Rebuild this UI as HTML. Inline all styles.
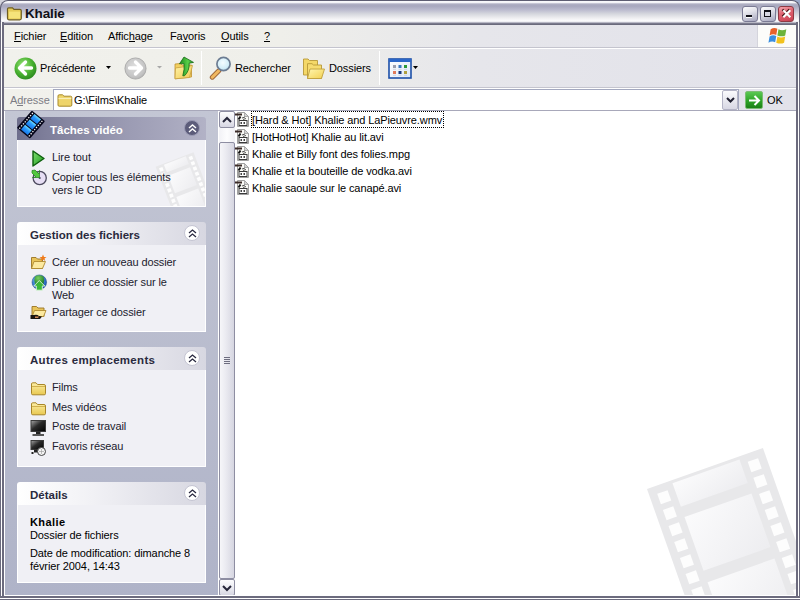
<!DOCTYPE html>
<html><head><meta charset="utf-8">
<style>
*{margin:0;padding:0;box-sizing:border-box}
html,body{width:800px;height:600px;overflow:hidden;background:#fff;font-family:"Liberation Sans",sans-serif;font-size:11px;color:#000;letter-spacing:-0.1px}
.a{position:absolute}
#win{position:absolute;left:0;top:0;width:800px;height:600px;background:#fff;overflow:hidden}
/* frame */
#fl{position:absolute;left:0;top:22px;width:4px;height:578px;background:linear-gradient(90deg,#6c6b7e 0,#6c6b7e 1px,#fff 1px,#fff 2px,#6c6b7e 2px,#6c6b7e 4px)}
#fr{position:absolute;left:796px;top:22px;width:4px;height:578px;background:linear-gradient(90deg,#6c6b7e 0,#6c6b7e 2px,#fff 2px,#fff 3px,#6c6b7e 3px)}
#fb{position:absolute;left:0;top:596px;width:800px;height:4px;background:linear-gradient(#6c6b7e 0,#6c6b7e 2px,#fff 2px,#fff 3px,#6c6b7e 3px)}
#title{position:absolute;left:0;top:0;width:800px;height:25px;border-radius:8px 8px 0 0;border:1px solid #5e5e72;border-bottom:none;
 background:linear-gradient(#fafafc 0px,#f4f4f8 1.5px,#b0b0c4 3px,#a8a8be 5px,#bcbccf 9px,#d6d8de 13px,#eeeef0 17px,#fcfcfe 20px,#e4e4ea 21px,#8c8ca0 22px,#6a6a7c 23px);}
#title .t{position:absolute;left:24px;top:5px;font-weight:bold;font-size:13.5px;color:#101018;letter-spacing:-0.15px}
.tbtn{position:absolute;top:5px;width:16px;height:16px;border-radius:3px;border:1px solid #7a7a94;
 background:linear-gradient(160deg,#fcfcfe 0%,#e2e2ea 40%,#b4b4c8 85%,#a4a4bc 100%)}
.menubar{position:absolute;left:4px;top:25px;width:792px;height:23px;background:linear-gradient(90deg,#f1f1ec 0%,#efefea 35%,#e6e6eb 60%,#e2e2ea 100%);border-bottom:1px solid #c4c4ce}
.menubar>span{position:absolute;top:5px}
.u{display:inline-block;border-bottom:1px solid #000;line-height:10px}
.logo{position:absolute;left:753px;top:0;width:39px;height:22px;background:#fcfcfa;border-left:1px solid #d4d4dc}
.toolbar{position:absolute;left:4px;top:48px;width:792px;height:41px;background:linear-gradient(#fff 0,#fff 1px,transparent 1px,transparent 39px,#c4c4ce 39px,#c4c4ce 40px,#fff 40px),linear-gradient(90deg,#f1f1ec 0%,#efefea 35%,#e6e6eb 60%,#e2e2ea 100%)}
.addr{position:absolute;left:4px;top:89px;width:792px;height:22px;background:linear-gradient(90deg,#f1f1ec 0%,#efefea 35%,#e6e6eb 60%,#e2e2ea 100%)}
.content{position:absolute;left:4px;top:111px;width:792px;height:485px;background:#fff}
.pane{position:absolute;left:0;top:0;width:214px;height:485px;background:linear-gradient(#c3c6d4,#afb3c8);border-left:1px solid #fff}
.grp{position:absolute;left:12px;width:189px}
.gh{position:absolute;left:0;top:0;width:189px;height:23px;border-radius:3px 3px 0 0;background:linear-gradient(90deg,#ffffff 0%,#f1f1f5 40%,#d7d7e1 100%)}
.gh .t{position:absolute;left:13px;top:7px;font-weight:bold;font-size:11.5px;color:#2a2a3e;letter-spacing:0}
.gb{position:absolute;left:0;top:23px;width:189px;background:#f0f0f5;border:1px solid #fff;border-top:none;overflow:hidden}
.chev{position:absolute;left:167px;top:3px;width:16px;height:16px;border-radius:50%;background:#fff;border:1px solid #c4c4d2}
.it{position:absolute;left:34px;color:#21212e;line-height:13px}
.ic{position:absolute;left:14px}
.sb{position:absolute;left:215px;top:0;width:16px;height:485px;background:linear-gradient(90deg,#f2f2f6,#fdfdfe 50%,#f0f0f4)}
.files .f{position:absolute;left:248px;line-height:13px;white-space:nowrap}
.files .fi{position:absolute;left:231px}
</style></head><body>
<div id="win">
<svg width="0" height="0" style="position:absolute"><defs>
<linearGradient id="frg" x1="0" y1="0" x2="1" y2="1"><stop offset="0" stop-color="#fbfbfc"/><stop offset="1" stop-color="#ededf0"/></linearGradient>
<g id="film">
<rect x="0" y="0" width="123" height="220" fill="#e8e8ea"/>
<rect x="8" y="8" width="11" height="11" fill="#fdfdfd"/><rect x="8" y="25" width="11" height="11" fill="#fdfdfd"/><rect x="8" y="42" width="11" height="11" fill="#fdfdfd"/><rect x="8" y="59" width="11" height="11" fill="#fdfdfd"/><rect x="8" y="76" width="11" height="11" fill="#fdfdfd"/><rect x="8" y="93" width="11" height="11" fill="#fdfdfd"/><rect x="8" y="110" width="11" height="11" fill="#fdfdfd"/><rect x="8" y="127" width="11" height="11" fill="#fdfdfd"/><rect x="8" y="144" width="11" height="11" fill="#fdfdfd"/>
<rect x="104" y="8" width="11" height="11" fill="#fdfdfd"/><rect x="104" y="25" width="11" height="11" fill="#fdfdfd"/><rect x="104" y="42" width="11" height="11" fill="#fdfdfd"/><rect x="104" y="59" width="11" height="11" fill="#fdfdfd"/><rect x="104" y="76" width="11" height="11" fill="#fdfdfd"/><rect x="104" y="93" width="11" height="11" fill="#fdfdfd"/><rect x="104" y="110" width="11" height="11" fill="#fdfdfd"/><rect x="104" y="127" width="11" height="11" fill="#fdfdfd"/><rect x="104" y="144" width="11" height="11" fill="#fdfdfd"/>
<rect x="26" y="3" width="71" height="25" fill="url(#frg)"/>
<rect x="26" y="39" width="71" height="57" fill="url(#frg)"/>
<rect x="26" y="108" width="71" height="57" fill="url(#frg)"/>
</g></defs></svg>
 <div class="a" style="left:0;top:0;width:8px;height:8px;background:#d4d4dc"></div>
 <div class="a" style="left:792px;top:0;width:8px;height:8px;background:#9aa8c8"></div>
 <div id="title">
  <svg class="a" style="left:5px;top:6px" width="17" height="14" viewBox="0 0 17 14">
   <path d="M1.5 2 Q1.5 0.8 2.7 0.8 H6.5 L8 2.3 H13.8 Q15.3 2.3 15.3 3.8 V11.3 Q15.3 12.8 13.8 12.8 H3 Q1.5 12.8 1.5 11.3 Z" fill="#e6cc58" stroke="#6e5e24" stroke-width="1.2"/>
   <path d="M3 4.6 H14 V11.4 H3 Z" fill="#f6e47a"/>
  </svg>
  <div class="t">Khalie</div>
  <div class="tbtn" style="left:741px"><div class="a" style="left:3px;top:8px;width:6px;height:3px;background:#101018;border-bottom:1px solid #fff"></div></div>
  <div class="tbtn" style="left:759px"><div class="a" style="left:3px;top:3px;width:7px;height:7px;border:1px solid #101018;border-top-width:2px;background:#d8d8e4"></div></div>
  <div class="tbtn" style="left:777px;border-color:#8e3a44;background:linear-gradient(160deg,#f4a8b0 0%,#e06472 40%,#d04a5a 85%,#b83848 100%)">
   <svg class="a" style="left:2px;top:1px" width="12" height="12" viewBox="0 0 12 12"><path d="M1.5 1.5 L8.5 8.5 M8.5 1.5 L1.5 8.5" stroke="#3a1010" stroke-width="2.2"/><path d="M2.3 2.3 L9.3 9.3 M9.3 2.3 L2.3 9.3" stroke="#fff" stroke-width="2.2"/></svg>
  </div>
 </div>
 <div class="a" style="left:4px;top:595px;width:792px;height:1px;background:#fff;z-index:3"></div>
 <div id="fl"></div><div id="fr"></div><div id="fb"></div>
 <div class="menubar">
  <span style="left:10px"><span class="u">F</span>ichier</span>
  <span style="left:56px"><span class="u">E</span>dition</span>
  <span style="left:104px">Affic<span class="u">h</span>age</span>
  <span style="left:166px">Fa<span class="u">v</span>oris</span>
  <span style="left:217px"><span class="u">O</span>utils</span>
  <span style="left:260px"><span class="u">?</span></span>
  <div class="logo">
   <svg class="a" style="left:10px;top:1px" width="21" height="19" viewBox="0 0 18 17">
    <path d="M2 3 Q5 1 8 2.5 L7 8 Q4 6.5 1 8.5 Z" fill="#e8622a"/>
    <path d="M9 3 Q12 4.5 16 3 L15 8.5 Q12 10 8 8.5 Z" fill="#6cb33a"/>
    <path d="M1 9.5 Q4 7.5 7 9 L6 14.5 Q3 13 0 15 Z" fill="#3a8ee0"/>
    <path d="M8 9.5 Q11 11 15 9.5 L14 15 Q11 16.5 7 15 Z" fill="#f2c21e"/>
   </svg>
  </div>
 </div>
 <div class="toolbar">
  <!-- back -->
  <svg class="a" style="left:10px;top:9px" width="23" height="23" viewBox="0 0 23 23">
   <defs><radialGradient id="gb" cx="0.4" cy="0.35" r="0.75"><stop offset="0" stop-color="#9ae67a"/><stop offset="0.55" stop-color="#48b030"/><stop offset="1" stop-color="#24801c"/></radialGradient></defs>
   <circle cx="11.5" cy="11.5" r="11" fill="url(#gb)"/>
   <path d="M5.5 11 L11.5 5 M5.5 11 L11.5 17 M6 11 H17.5" stroke="#fff" stroke-width="3.4" stroke-linecap="round" stroke-linejoin="round" fill="none"/>
  </svg>
  <span class="a" style="left:36px;top:14px">Précédente</span>
  <svg class="a" style="left:102px;top:18px" width="5" height="3"><path d="M0 0 H5 L2.5 3 Z" fill="#000"/></svg>
  <!-- forward -->
  <svg class="a" style="left:120px;top:9px" width="23" height="23" viewBox="0 0 23 23">
   <defs><radialGradient id="gf" cx="0.45" cy="0.4" r="0.7"><stop offset="0" stop-color="#dedede"/><stop offset="0.7" stop-color="#c4c4c4"/><stop offset="1" stop-color="#a8a8a8"/></radialGradient></defs>
   <circle cx="11.5" cy="11.5" r="10.6" fill="url(#gf)" stroke="#a4a4a4" stroke-width="0.8"/>
   <path d="M17.5 11 L11.5 5 M17.5 11 L11.5 17 M17 11 H5.5" stroke="#fff" stroke-width="3.4" stroke-linecap="round" stroke-linejoin="round" fill="none"/>
  </svg>
  <svg class="a" style="left:153px;top:18px" width="5" height="3"><path d="M0 0 H5 L2.5 2.5 Z" fill="#a8a8a8"/></svg>
  <!-- up -->
  <svg class="a" style="left:170px;top:8px" width="22" height="24" viewBox="0 0 22 24">
   <defs><linearGradient id="upg" x1="0" y1="0" x2="1" y2="1"><stop offset="0" stop-color="#fff4a8"/><stop offset="1" stop-color="#f0c850"/></linearGradient>
   <linearGradient id="ara" x1="0" y1="0" x2="1" y2="0"><stop offset="0" stop-color="#1a8a1a"/><stop offset="0.6" stop-color="#5ad04a"/><stop offset="1" stop-color="#2a9a2a"/></linearGradient></defs>
   <path d="M1 8 L6.5 7.5 L8 9 H17.5 V21 L1 22.8 Z" fill="#f2d060" stroke="#c09030" stroke-width="0.8"/>
   <path d="M1 22.8 L1.5 12 L18.5 9.5 L15.5 21.5 Z" fill="url(#upg)" stroke="#c8a040" stroke-width="0.8"/>
   <path d="M5.5 7.8 L10 1 L19.5 6.4 L15.2 7.2 Q15.5 15 10.5 19.8 L8.8 19.8 Q10.8 13 10 7.6 Z" fill="url(#ara)" stroke="#136a13" stroke-width="0.8" stroke-linejoin="round"/>
  </svg>
  <div class="a" style="left:197px;top:3px;width:1px;height:34px;background:#c8c8d0;border-right:1px solid #fff"></div>
  <!-- search -->
  <svg class="a" style="left:204px;top:8px" width="24" height="24" viewBox="0 0 24 24">
   <defs><radialGradient id="lens" cx="0.45" cy="0.4" r="0.6"><stop offset="0" stop-color="#f4fcff"/><stop offset="0.7" stop-color="#d4eef8"/><stop offset="1" stop-color="#b8dcec"/></radialGradient></defs>
   <path d="M4.3 21.2 L10.8 14.8" stroke="#a0683a" stroke-width="5" stroke-linecap="round"/>
   <path d="M4.3 21.2 L10.8 14.8" stroke="#f0b860" stroke-width="3" stroke-linecap="round"/>
   <circle cx="15.5" cy="8" r="6.6" fill="url(#lens)" stroke="#6c7c92" stroke-width="1.7"/>
  </svg>
  <span class="a" style="left:231px;top:14px">Rechercher</span>
  <!-- folders -->
  <svg class="a" style="left:298px;top:10px" width="24" height="22" viewBox="0 0 24 22">
   <defs><linearGradient id="fdg" x1="0" y1="0" x2="1" y2="1"><stop offset="0" stop-color="#fff6b0"/><stop offset="1" stop-color="#f2d050"/></linearGradient></defs>
   <path d="M1.5 1 H6 L7.5 2.5 H15.5 V17 H1.5 Z" fill="#f4d868" stroke="#b89838" stroke-width="0.9"/>
   <path d="M5.5 5.7 H10 L11.5 7 H19.5 V20.5 H5.5 Z" fill="#f6dc70" stroke="#b89838" stroke-width="0.9"/>
   <path d="M5.5 20.5 L8 11 H22.5 L19.5 20.5 Z" fill="url(#fdg)" stroke="#c0a040" stroke-width="0.9"/>
  </svg>
  <span class="a" style="left:325px;top:14px">Dossiers</span>
  <div class="a" style="left:375px;top:3px;width:1px;height:34px;background:#c8c8d0;border-right:1px solid #fff"></div>
  <!-- views -->
  <svg class="a" style="left:384px;top:10px" width="24" height="21" viewBox="0 0 24 21">
   <defs><linearGradient id="vw" x1="0" y1="0" x2="1" y2="1"><stop offset="0" stop-color="#ffffff"/><stop offset="1" stop-color="#dce8f8"/></linearGradient></defs>
   <rect x="1" y="1" width="22" height="19" fill="url(#vw)" stroke="#1c4fa8" stroke-width="1.6"/>
   <rect x="1" y="1" width="22" height="3" fill="#2a66c8"/>
   <rect x="5" y="7" width="3" height="3" fill="#9aa0b0"/><rect x="10.5" y="7" width="3" height="3" fill="#3a78c0"/><rect x="16" y="7" width="3" height="3" fill="#2a9a3a"/>
   <rect x="5" y="13" width="3" height="3" fill="#e07a5a"/><rect x="10.5" y="13" width="3" height="3" fill="#1a3a80"/><rect x="16" y="13" width="3" height="3" fill="#b0a040"/>
   <path d="M5 11.3 H8 M10.5 11.3 H13.5 M16 11.3 H19 M5 17.3 H8 M10.5 17.3 H13.5 M16 17.3 H19" stroke="#b8c0d0" stroke-width="0.6"/>
  </svg>
  <svg class="a" style="left:409px;top:18px" width="5" height="3"><path d="M0 0 H5 L2.5 3 Z" fill="#000"/></svg>
 </div>
 <div class="addr">
  <span class="a" style="left:6px;top:5px;color:#7c7c84">A<span class="u" style="border-color:#7c7c84">d</span>resse</span>
  <div class="a" style="left:49px;top:0px;width:686px;height:22px;background:#fff;border:1px solid #a3a8bf"></div>
  <svg class="a" style="left:53px;top:5px" width="16" height="13" viewBox="0 0 16 13">
   <path d="M1 2 Q1 0.8 2.2 0.8 H5.5 L7 2.2 H13.5 Q14.8 2.2 14.8 3.5 V11 Q14.8 12.2 13.6 12.2 H2.2 Q1 12.2 1 11 Z" fill="#eed46a" stroke="#a88a2c" stroke-width="1"/>
   <path d="M1.5 4.5 H14.3" stroke="#f9eeb8" stroke-width="1.2"/>
  </svg>
  <span class="a" style="left:70px;top:5px">G:\Films\Khalie</span>
  <div class="a" style="left:718px;top:1px;width:16px;height:20px;border:1px solid #b4b4c6;border-radius:2px;background:linear-gradient(#fafafc,#d8d8e4)">
   <svg class="a" style="left:3px;top:6px" width="9" height="6"><path d="M1 1 L4.5 4.5 L8 1" stroke="#202030" stroke-width="2" fill="none"/></svg>
  </div>
  <div class="a" style="left:741px;top:2px;width:18px;height:18px;border-radius:2px;background:linear-gradient(#5ac852,#2ea428 55%,#1c8016);border:1px solid #7cbc74">
   <svg class="a" style="left:2px;top:2px" width="13" height="13" viewBox="0 0 13 13"><path d="M1 6.5 H11 M6.5 2 L11 6.5 L6.5 11" stroke="#fff" stroke-width="2" fill="none"/></svg>
  </div>
  <span class="a" style="left:763px;top:5px">OK</span>
  <div class="a" style="left:0;top:21px;width:792px;height:1px;background:#a8a8ba"></div>
 </div>
 <div class="content">
  <svg class="a" style="left:0;top:0" width="792" height="485"><use href="#film" transform="translate(643,378) rotate(-19.5)"/></svg>
  <div class="pane">
   <!-- group 1 -->
   <div class="grp" style="top:6px">
    <svg class="a" style="left:-3px;top:-9px;z-index:2" width="36" height="34" viewBox="0 0 36 34">
<defs><linearGradient id="blu" x1="0" y1="0" x2="1" y2="0"><stop offset="0" stop-color="#1a78e8"/><stop offset="0.6" stop-color="#2a9cff"/><stop offset="1" stop-color="#70e0ff"/></linearGradient></defs>
<g transform="matrix(0.72,-0.83,0.88,0.72,3.6,19.8)">
<rect x="-0.5" y="-0.5" width="21" height="15" rx="1" fill="#06061a"/>
<line x1="0.5" y1="1.6" x2="19.5" y2="1.6" stroke="#fff" stroke-width="1.1" stroke-dasharray="1.2 1.3"/>
<line x1="0.5" y1="12.4" x2="19.5" y2="12.4" stroke="#fff" stroke-width="1.1" stroke-dasharray="1.2 1.3"/>
<rect x="0.8" y="3.2" width="5.6" height="7.6" fill="url(#blu)"/>
<rect x="7.3" y="3.2" width="5.6" height="7.6" fill="url(#blu)"/>
<rect x="13.8" y="3.2" width="5.6" height="7.6" fill="url(#blu)"/>
</g></svg>
    <div class="gh" style="background:linear-gradient(90deg,#6e6e8c 0%,#7e7e9a 15%,#9c9cb4 60%,#b2b2c6 100%)"><div class="t" style="left:33px;color:#fff">Tâches vidéo</div>
     <div class="chev" style="background:#5c5c7a;border-color:#9a9ab4"><svg class="a" style="left:2.5px;top:3px" width="9" height="9"><path d="M1 4 L4.5 1 L8 4 M1 8 L4.5 5 L8 8" stroke="#fff" stroke-width="1.4" fill="none"/></svg></div>
    </div>
    <div class="gb" style="height:67px">
     <svg class="a" style="left:0;top:0" width="190" height="67"><use href="#film" transform="translate(137.6,26.8) rotate(-21) scale(0.33)"/></svg>
     <svg class="ic" style="top:10px;left:14px" width="13" height="17" viewBox="0 0 13 17"><defs><linearGradient id="pl" x1="0" y1="0" x2="1" y2="1"><stop offset="0" stop-color="#7ee070"/><stop offset="1" stop-color="#1e9a1e"/></linearGradient></defs><path d="M1 1 L12 8.5 L1 16 Z" fill="url(#pl)" stroke="#0c5e0c" stroke-width="1.4" stroke-linejoin="round"/></svg>
     <span class="it" style="top:11px">Lire tout</span>
     <svg class="ic" style="top:29px;left:13px" width="17" height="17" viewBox="0 0 17 17"><circle cx="8.7" cy="9" r="6.6" fill="#e6def4" stroke="#4c4a5e" stroke-width="1.3"/><circle cx="8.7" cy="9" r="1.1" fill="#4c4a5e"/><path d="M1 1.5 L4 1 L8 5 L8.5 1.5 V8.5 H1.5 L5 8 L1 4 Z" fill="#52c83e" stroke="#20801a" stroke-width="0.7"/></svg>
     <span class="it" style="top:31px">Copier tous les éléments<br>vers le CD</span>
    </div>
   </div>
   <!-- group 2 -->
   <div class="grp" style="top:111px">
    <div class="gh"><div class="t">Gestion des fichiers</div><div class="chev"><svg class="a" style="left:2.5px;top:3px" width="9" height="9"><path d="M1 4 L4.5 1 L8 4 M1 8 L4.5 5 L8 8" stroke="#2a2a40" stroke-width="1.3" fill="none"/></svg></div></div>
    <div class="gb" style="height:87px">
     <svg class="ic" style="top:9px;left:12px" width="17" height="16" viewBox="0 0 17 16"><path d="M1.5 3.5 H6 L7.5 5 H12.5 V14.5 H1.5 Z" fill="#e8c45a" stroke="#9a7424" stroke-width="0.9"/><path d="M1.5 14.5 L4 7.5 H15.5 L12.5 14.5 Z" fill="#fce9a0" stroke="#b08a30" stroke-width="0.9"/><path d="M13 0.5 L14 3 L16.5 3 L14.5 4.6 L15.3 7 L13 5.6 L10.7 7 L11.5 4.6 L9.5 3 L12 3 Z" fill="#f07a18"/></svg>
     <span class="it" style="top:11px">Créer un nouveau dossier</span>
     <svg class="ic" style="top:29px;left:13px" width="17" height="17" viewBox="0 0 17 17"><defs><radialGradient id="glb" cx="0.4" cy="0.35" r="0.7"><stop offset="0" stop-color="#70c0ff"/><stop offset="1" stop-color="#1a50b0"/></radialGradient><radialGradient id="gln" cx="0.4" cy="0.3" r="0.7"><stop offset="0" stop-color="#78d060"/><stop offset="1" stop-color="#1e7a28"/></radialGradient></defs><circle cx="8.3" cy="8.2" r="7.3" fill="url(#glb)" stroke="#1a4a80" stroke-width="0.5"/><path d="M4 2.5 Q8 0 12.5 2.5 Q14 6 12.5 10 Q8 12 4 10 Q2.5 6 4 2.5 Z" fill="url(#gln)"/><path d="M2.8 12 L8.3 6.5 L13.8 12 H11.3 V16.2 H5.3 V12 Z" fill="#3ab83a" stroke="#e0f4e0" stroke-width="0.9"/></svg>
     <span class="it" style="top:31px">Publier ce dossier sur le<br>Web</span>
     <svg class="ic" style="top:59px;left:12px" width="17" height="16" viewBox="0 0 17 16"><path d="M2 2.5 H6.5 L8 4 H14 V12.5 H2 Z" fill="#e8c45a" stroke="#9a7424" stroke-width="0.9"/><path d="M2 12.5 L4.5 6.5 H16 L13.5 12.5 Z" fill="#fce9a0" stroke="#b08a30" stroke-width="0.9"/><path d="M0.5 11 H4 Q7 10 9 12 L12 12.5 L10 15 H0.5 Z" fill="#1a1410"/><path d="M5 12.5 H9 L8 14 H5 Z" fill="#d08858"/></svg>
     <span class="it" style="top:61px">Partager ce dossier</span>
    </div>
   </div>
   <!-- group 3 -->
   <div class="grp" style="top:236px">
    <div class="gh"><div class="t" style="letter-spacing:0.3px">Autres emplacements</div><div class="chev"><svg class="a" style="left:2.5px;top:3px" width="9" height="9"><path d="M1 4 L4.5 1 L8 4 M1 8 L4.5 5 L8 8" stroke="#2a2a40" stroke-width="1.3" fill="none"/></svg></div></div>
    <div class="gb" style="height:97px">
     <svg class="ic" style="top:12px;left:12px" width="17" height="14" viewBox="0 0 17 14"><defs><linearGradient id="fy1" x1="0" y1="0" x2="0" y2="1"><stop offset="0" stop-color="#fcefa8"/><stop offset="1" stop-color="#e9c850"/></linearGradient></defs><path d="M1.5 2 Q1.5 0.8 2.7 0.8 H6 L7.5 2.5 H14 Q15.5 2.5 15.5 4 V11.5 Q15.5 12.8 14.2 12.8 H2.8 Q1.5 12.8 1.5 11.5 Z" fill="url(#fy1)" stroke="#a8862a" stroke-width="1"/><path d="M2 4.5 H15" stroke="#c8a440" stroke-width="0.8"/></svg>
     <span class="it" style="top:11px">Films</span>
     <svg class="ic" style="top:32px;left:12px" width="17" height="14" viewBox="0 0 17 14"><defs><linearGradient id="fy2" x1="0" y1="0" x2="0" y2="1"><stop offset="0" stop-color="#fcefa8"/><stop offset="1" stop-color="#e9c850"/></linearGradient></defs><path d="M1.5 2 Q1.5 0.8 2.7 0.8 H6 L7.5 2.5 H14 Q15.5 2.5 15.5 4 V11.5 Q15.5 12.8 14.2 12.8 H2.8 Q1.5 12.8 1.5 11.5 Z" fill="url(#fy2)" stroke="#a8862a" stroke-width="1"/><path d="M2 4.5 H15" stroke="#c8a440" stroke-width="0.8"/></svg>
     <span class="it" style="top:31px">Mes vidéos</span>
     <svg class="ic" style="top:50px;left:12px" width="17" height="17" viewBox="0 0 17 17"><defs><linearGradient id="scr" x1="0" y1="0" x2="1" y2="1"><stop offset="0" stop-color="#a8a8a8"/><stop offset="0.45" stop-color="#2a2a2a"/><stop offset="1" stop-color="#000"/></linearGradient></defs><rect x="1" y="0.5" width="14.5" height="11" fill="url(#scr)" stroke="#3a3a3a"/><rect x="6" y="11.5" width="4.5" height="2.5" fill="#222"/><rect x="2.5" y="14" width="11.5" height="2" fill="#555"/></svg>
     <span class="it" style="top:50px">Poste de travail</span>
     <svg class="ic" style="top:70px;left:12px" width="17" height="17" viewBox="0 0 17 17"><rect x="1" y="0.5" width="12.5" height="9" fill="url(#scr)" stroke="#3a3a3a"/><rect x="4" y="9.5" width="4" height="3" fill="#222"/><circle cx="11.5" cy="11.5" r="4" fill="#f4f4f4" stroke="#444" stroke-width="1"/><path d="M9 11.5 H14 M11.5 9 V14" stroke="#999" stroke-width="0.6"/><rect x="1.5" y="12" width="2" height="2" fill="#222"/></svg>
     <span class="it" style="top:70px">Favoris réseau</span>
    </div>
   </div>
   <!-- group 4 -->
   <div class="grp" style="top:371px">
    <div class="gh"><div class="t">Détails</div><div class="chev"><svg class="a" style="left:2.5px;top:3px" width="9" height="9"><path d="M1 4 L4.5 1 L8 4 M1 8 L4.5 5 L8 8" stroke="#2a2a40" stroke-width="1.3" fill="none"/></svg></div></div>
    <div class="gb" style="height:78px">
     <span class="it" style="top:11px;left:12px;font-weight:bold;color:#000;letter-spacing:0.4px">Khalie</span>
     <span class="it" style="top:24px;left:12px;color:#000">Dossier de fichiers</span>
     <span class="it" style="top:42px;left:12px;color:#000">Date de modification: dimanche 8<br>février 2004, 14:43</span>
    </div>
   </div>
  </div>
  <div class="sb">
   <div class="a" style="left:0;top:0;width:16px;height:17px;border:1px solid #8e8ea2;border-radius:2px;background:linear-gradient(#fdfdfe,#e9e9f0 60%,#d6d6e2)">
    <svg class="a" style="left:2px;top:4px" width="10" height="7"><path d="M1 6 L5 2 L9 6" stroke="#26263a" stroke-width="2" fill="none"/></svg>
   </div>
   <div class="a" style="left:0;top:31px;width:16px;height:437px;border:1px solid #8e8ea2;border-radius:2px;background:linear-gradient(90deg,#f6f6f9,#ebebf1 40%,#d6d6e1)">
    <div class="a" style="left:4px;top:214px;width:6px;height:7px;background:repeating-linear-gradient(#6e6e80 0,#6e6e80 1px,transparent 1px,transparent 2px)"></div>
   </div>
   <div class="a" style="left:0;top:468px;width:16px;height:17px;border:1px solid #8e8ea2;border-radius:2px;background:linear-gradient(#fdfdfe,#e9e9f0 60%,#d6d6e2)">
    <svg class="a" style="left:2px;top:5px" width="10" height="7"><path d="M1 1 L5 5 L9 1" stroke="#26263a" stroke-width="2" fill="none"/></svg>
   </div>
  </div>
  <div class="files" id="files">
<svg class="fi" style="top:1px" width="16" height="16" viewBox="0 0 16 16"><path d="M2.5 0.5 H9.5 L13.5 4.5 V14.5 H2.5 Z" fill="#fafaf6" stroke="#a0a0a0"/><path d="M9.5 0.5 V4.5 H13.5 Z" fill="#d4d4d4" stroke="#a0a0a0" stroke-width="0.8"/><rect x="0" y="1.5" width="7" height="2" fill="#3a2a26"/><path d="M3.5 7.5 L5.5 4.5" stroke="#111" stroke-width="2"/><path d="M7 6 L10 5 M8 7.5 L11 6.5" stroke="#555" stroke-width="1"/><rect x="4" y="8.5" width="8" height="5" fill="#fff" stroke="#3a3a3a" stroke-width="1"/><rect x="5.5" y="10" width="1.5" height="2" fill="#444"/><rect x="8.5" y="10" width="1.5" height="2" fill="#444"/></svg><span class="f" style="top:3px">[Hard &amp; Hot] Khalie and LaPieuvre.wmv</span>
<svg class="fi" style="top:18px" width="16" height="16" viewBox="0 0 16 16"><path d="M2.5 0.5 H9.5 L13.5 4.5 V14.5 H2.5 Z" fill="#fafaf6" stroke="#a0a0a0"/><path d="M9.5 0.5 V4.5 H13.5 Z" fill="#d4d4d4" stroke="#a0a0a0" stroke-width="0.8"/><rect x="0" y="1.5" width="7" height="2" fill="#3a2a26"/><path d="M3.5 7.5 L5.5 4.5" stroke="#111" stroke-width="2"/><path d="M7 6 L10 5 M8 7.5 L11 6.5" stroke="#555" stroke-width="1"/><rect x="4" y="8.5" width="8" height="5" fill="#fff" stroke="#3a3a3a" stroke-width="1"/><rect x="5.5" y="10" width="1.5" height="2" fill="#444"/><rect x="8.5" y="10" width="1.5" height="2" fill="#444"/></svg><span class="f" style="top:20px">[HotHotHot] Khalie au lit.avi</span>
<svg class="fi" style="top:35px" width="16" height="16" viewBox="0 0 16 16"><path d="M2.5 0.5 H9.5 L13.5 4.5 V14.5 H2.5 Z" fill="#fafaf6" stroke="#a0a0a0"/><path d="M9.5 0.5 V4.5 H13.5 Z" fill="#d4d4d4" stroke="#a0a0a0" stroke-width="0.8"/><rect x="0" y="1.5" width="7" height="2" fill="#3a2a26"/><path d="M3.5 7.5 L5.5 4.5" stroke="#111" stroke-width="2"/><path d="M7 6 L10 5 M8 7.5 L11 6.5" stroke="#555" stroke-width="1"/><rect x="4" y="8.5" width="8" height="5" fill="#fff" stroke="#3a3a3a" stroke-width="1"/><rect x="5.5" y="10" width="1.5" height="2" fill="#444"/><rect x="8.5" y="10" width="1.5" height="2" fill="#444"/></svg><span class="f" style="top:37px">Khalie et Billy font des folies.mpg</span>
<svg class="fi" style="top:52px" width="16" height="16" viewBox="0 0 16 16"><path d="M2.5 0.5 H9.5 L13.5 4.5 V14.5 H2.5 Z" fill="#fafaf6" stroke="#a0a0a0"/><path d="M9.5 0.5 V4.5 H13.5 Z" fill="#d4d4d4" stroke="#a0a0a0" stroke-width="0.8"/><rect x="0" y="1.5" width="7" height="2" fill="#3a2a26"/><path d="M3.5 7.5 L5.5 4.5" stroke="#111" stroke-width="2"/><path d="M7 6 L10 5 M8 7.5 L11 6.5" stroke="#555" stroke-width="1"/><rect x="4" y="8.5" width="8" height="5" fill="#fff" stroke="#3a3a3a" stroke-width="1"/><rect x="5.5" y="10" width="1.5" height="2" fill="#444"/><rect x="8.5" y="10" width="1.5" height="2" fill="#444"/></svg><span class="f" style="top:54px">Khalie et la bouteille de vodka.avi</span>
<svg class="fi" style="top:69px" width="16" height="16" viewBox="0 0 16 16"><path d="M2.5 0.5 H9.5 L13.5 4.5 V14.5 H2.5 Z" fill="#fafaf6" stroke="#a0a0a0"/><path d="M9.5 0.5 V4.5 H13.5 Z" fill="#d4d4d4" stroke="#a0a0a0" stroke-width="0.8"/><rect x="0" y="1.5" width="7" height="2" fill="#3a2a26"/><path d="M3.5 7.5 L5.5 4.5" stroke="#111" stroke-width="2"/><path d="M7 6 L10 5 M8 7.5 L11 6.5" stroke="#555" stroke-width="1"/><rect x="4" y="8.5" width="8" height="5" fill="#fff" stroke="#3a3a3a" stroke-width="1"/><rect x="5.5" y="10" width="1.5" height="2" fill="#444"/><rect x="8.5" y="10" width="1.5" height="2" fill="#444"/></svg><span class="f" style="top:71px">Khalie saoule sur le canapé.avi</span>
<div class="a" style="left:247px;top:0px;width:193px;height:17px;border:1px dotted #000"></div></div>
 </div>
</div>
</body></html>
